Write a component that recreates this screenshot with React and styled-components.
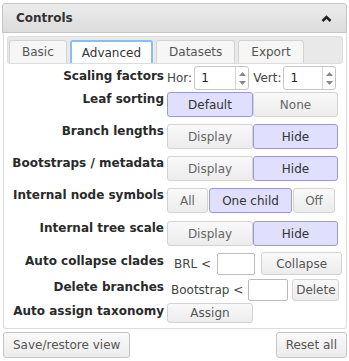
import React from 'react';
import styled, { createGlobalStyle } from 'styled-components';

const Global = createGlobalStyle`
	body {
		margin: 0;
		background: #fff;
		font-family: "DejaVu Sans", Verdana, sans-serif;
		font-size: 12px;
		color: #333;
	}
`;

const Wrapper = styled.div`
	width: 349px;
	padding: 3px 2px 0;
	box-sizing: border-box;
`;

const Header = styled.div`
	height: 28px;
	display: flex;
	align-items: center;
	justify-content: space-between;
	padding: 0 14px 0 13px;
	border: 1px solid #c5c5c5;
	border-radius: 3px 3px 0 0;
	background: linear-gradient(#ececec, #dcdcdc);
	font-weight: bold;
	color: #333;
`;

const Panel = styled.div`
	margin: 0 0 0 1px;
	border: 1px solid #ddd;
	border-top: none;
	border-radius: 0 0 3px 3px;
	padding: 3px 3px 5px;
`;

const TabBar = styled.div`
	display: flex;
	gap: 3px;
	height: 23px;
	padding: 3px 3px 0 1px;
	border: 1px solid #ddd;
	border-radius: 3px;
	background: #e9e9e9;
`;

const Tab = styled.div`
	display: flex;
	align-items: center;
	padding: 0 ${p => (p.$active ? 10 : 12)}px;
	border: ${p => (p.$active ? '2px solid #8cbcf0' : '1px solid #d3d3d3')};
	border-bottom: none;
	border-radius: 3px 3px 0 0;
	background: ${p => (p.$active ? '#fff' : '#f6f6f6')};
	color: ${p => (p.$active ? '#333' : '#555')};
`;

const Form = styled.div`
	display: flex;
	flex-direction: column;
	padding-top: 2px;
`;

const Row = styled.div`
	display: grid;
	grid-template-columns: 157px auto;
	column-gap: 3px;
	align-items: start;
	margin-top: ${p => p.$gap || 0}px;
`;

const Label = styled.div`
	font-weight: bold;
	text-align: right;
	line-height: 14px;
	padding-top: ${p => p.$pad || 0}px;
	white-space: nowrap;
	color: #2a2a2a;
`;

const Controls = styled.div`
	display: flex;
	align-items: center;
	gap: ${p => p.$gap || 0}px;
`;

const Toggle = styled.div`
	width: ${p => p.$w}px;
	height: ${p => p.$h || 25}px;
	box-sizing: border-box;
	display: flex;
	align-items: center;
	justify-content: center;
	margin-left: ${p => p.$ml || 0}px;
	border: 1px solid ${p => (p.$on ? '#9a9ad8' : '#d3d3d3')};
	border-radius: 3px;
	background: ${p => (p.$on ? '#e0e0fd' : 'linear-gradient(#f9f9f9, #ececec)')};
	color: ${p => (p.$on ? '#333' : p.$plain ? '#555' : '#666')};
`;

const Small = styled.span`
	color: #444;
	margin-left: ${p => p.$ml || 0}px;
	margin-right: ${p => p.$mr || 0}px;
`;

const TextBox = styled.div`
	width: ${p => p.$w}px;
	height: ${p => p.$h}px;
	box-sizing: border-box;
	border: 1px solid #bbb;
	border-radius: 2px;
	background: #fff;
`;

const Spin = styled.div`
	width: ${p => p.$w}px;
	height: 24px;
	box-sizing: border-box;
	display: flex;
	border: 1px solid #c5c5c5;
	border-radius: 3px;
	background: #fff;
`;

const SpinValue = styled.div`
	flex: 1;
	padding-left: 6px;
	line-height: 22px;
	color: #222;
`;

const SpinArrows = styled.div`
	width: 12px;
	border-left: 1px solid #d3d3d3;
	display: flex;
	flex-direction: column;
	justify-content: space-around;
	align-items: center;
	padding: 2px 0;
`;

const Footer = styled.div`
	display: flex;
	justify-content: space-between;
	margin-top: 3px;
	padding: 0 0 0 1px;
`;

const FootButton = styled.div`
	height: 26px;
	box-sizing: border-box;
	display: flex;
	align-items: center;
	padding: 0 9px;
	border: 1px solid #c5c5c5;
	border-radius: 3px;
	background: linear-gradient(#f9f9f9, #ececec);
	color: #555;
`;

const Arrow = ({ up }) => (
	<svg width="7" height="4" viewBox="0 0 7 4">
		<path d={up ? 'M0 4 L3.5 0 L7 4 Z' : 'M0 0 L3.5 4 L7 0 Z'} fill="#888" />
	</svg>
);

const Spinner = ({ w }) => (
	<Spin $w={w}>
		<SpinValue>1</SpinValue>
		<SpinArrows>
			<Arrow up />
			<Arrow />
		</SpinArrows>
	</Spin>
);

const Pair = ({ left, right, active }) => (
	<Controls>
		<Toggle $w={86} $on={active === 0}>{left}</Toggle>
		<Toggle $w={85} $on={active === 1}>{right}</Toggle>
	</Controls>
);

export default function App() {
	return (
		<Wrapper>
			<Global />
			<Header>
				<span>Controls</span>
				<svg width="11" height="7" viewBox="0 0 11 7">
					<polyline points="1.5,6 5.5,2 9.5,6" fill="none" stroke="#222" strokeWidth="2.6" />
				</svg>
			</Header>
			<Panel>
				<TabBar>
					<Tab>Basic</Tab>
					<Tab $active>Advanced</Tab>
					<Tab>Datasets</Tab>
					<Tab>Export</Tab>
				</TabBar>
				<Form>
					<Row>
						<Label $pad={3}>Scaling factors</Label>
						<Controls>
							<Small $mr={2}>Hor:</Small>
							<Spinner w={55} />
							<Small $ml={4} $mr={2}>Vert:</Small>
							<Spinner w={53} />
						</Controls>
					</Row>
					<Row $gap={2}>
						<Label>Leaf sorting</Label>
						<Pair left="Default" right="None" active={0} />
					</Row>
					<Row $gap={7}>
						<Label>Branch lengths</Label>
						<Pair left="Display" right="Hide" active={1} />
					</Row>
					<Row $gap={7}>
						<Label>Bootstraps / metadata</Label>
						<Pair left="Display" right="Hide" active={1} />
					</Row>
					<Row $gap={7}>
						<Label>Internal node symbols</Label>
						<Controls $gap={1}>
							<Toggle $w={41}>All</Toggle>
							<Toggle $w={83} $on>One child</Toggle>
							<Toggle $w={42}>Off</Toggle>
						</Controls>
					</Row>
					<Row $gap={8}>
						<Label>Internal tree scale</Label>
						<Pair left="Display" right="Hide" active={1} />
					</Row>
					<Row $gap={6}>
						<Label $pad={2}>Auto collapse clades</Label>
						<Controls>
							<Small $ml={7} $mr={6}>BRL &lt;</Small>
							<TextBox $w={38} $h={22} />
							<Toggle $w={81} $h={23} $ml={6} $plain>Collapse</Toggle>
						</Controls>
					</Row>
					<Row $gap={4}>
						<Label $pad={1}>Delete branches</Label>
						<Controls>
							<Small $ml={4} $mr={5}>Bootstrap &lt;</Small>
							<TextBox $w={40} $h={22} />
							<Toggle $w={47} $h={22} $ml={4} $plain>Delete</Toggle>
						</Controls>
					</Row>
					<Row $gap={2}>
						<Label $pad={1}>Auto assign taxonomy</Label>
						<Controls>
							<Toggle $w={86} $h={20} $plain>Assign</Toggle>
						</Controls>
					</Row>
				</Form>
			</Panel>
			<Footer>
				<FootButton>Save/restore view</FootButton>
				<FootButton>Reset all</FootButton>
			</Footer>
		</Wrapper>
	);
}
